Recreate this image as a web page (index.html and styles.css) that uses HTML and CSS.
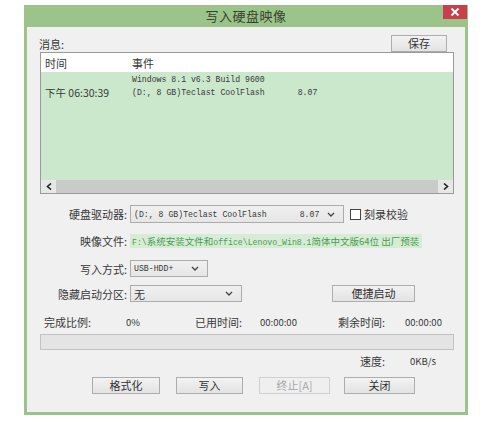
FILE: index.html
```html
<!DOCTYPE html>
<html lang="zh-CN">
<head>
<meta charset="utf-8">
<title>写入硬盘映像</title>
<link rel="stylesheet" href="styles.css">
</head>
<body>
<div class="window">
  <div class="titlebar">
    <span></span>
    <span class="title">写入硬盘映像</span>
    <span class="close"><svg width="10" height="8" viewBox="0 0 10 8"><path d="M1.5 0.5 L8.5 7.5 M8.5 0.5 L1.5 7.5" stroke="#fff" stroke-width="2"/></svg></span>
  </div>
  <div class="content">
    <div class="msg-row">
      <span class="msg-label">消息:</span>
      <button class="btn save">保存</button>
    </div>
    <div class="list">
      <div class="list-head"><span class="c1">时间</span><span class="c2">事件</span></div>
      <div class="list-body">
        <div class="entry">
          <span class="c1 time">下午 06:30:39</span>
          <div class="c2 ev">
            <div class="mono">Windows 8.1 v6.3 Build 9600</div>
            <div class="mono">(D:, 8 GB)Teclast CoolFlash<span class="ver">8.07</span></div>
          </div>
        </div>
      </div>
      <div class="hscroll">
        <span class="arrow"><svg width="6" height="7" viewBox="0 0 6 7"><path d="M5 0.5 L1.5 3.5 L5 6.5" stroke="#222" stroke-width="1.6" fill="none"/></svg></span>
        <span class="track"></span>
        <span class="arrow"><svg width="6" height="7" viewBox="0 0 6 7"><path d="M1 0.5 L4.5 3.5 L1 6.5" stroke="#222" stroke-width="1.6" fill="none"/></svg></span>
      </div>
    </div>

    <div class="row row-drive">
      <span class="lbl">硬盘驱动器:</span>
      <div class="combo combo-drive">
        <span class="mono">(D:, 8 GB)Teclast CoolFlash</span><span class="mono ver2">8.07</span>
        <svg class="chev" width="8" height="5" viewBox="0 0 8 5"><path d="M1 1 L4 4 L7 1" stroke="#444" stroke-width="1.3" fill="none"/></svg>
      </div>
      <span class="check"></span><span class="check-lbl">刻录校验</span>
    </div>

    <div class="row row-image">
      <span class="lbl">映像文件:</span>
      <div class="path"><span class="mono">F:\</span>系统安装文件和<span class="mono">office\Lenovo_Win8.1</span>简体中文版64位 出厂预装</div>
    </div>

    <div class="row row-mode">
      <span class="lbl">写入方式:</span>
      <div class="combo combo-mode">
        <span class="mono">USB-HDD+</span>
        <svg class="chev" width="8" height="5" viewBox="0 0 8 5"><path d="M1 1 L4 4 L7 1" stroke="#444" stroke-width="1.3" fill="none"/></svg>
      </div>
    </div>

    <div class="row row-hide">
      <span class="lbl">隐藏启动分区:</span>
      <div class="combo combo-hide">
        <span>无</span>
        <svg class="chev" width="8" height="5" viewBox="0 0 8 5"><path d="M1 1 L4 4 L7 1" stroke="#444" stroke-width="1.3" fill="none"/></svg>
      </div>
      <button class="btn quick">便捷启动</button>
    </div>

    <div class="stats">
      <span>完成比例:</span><span class="num">0%</span>
      <span>已用时间:</span><span class="num">00:00:00</span>
      <span>剩余时间:</span><span class="num">00:00:00</span>
    </div>

    <div class="progress"></div>

    <div class="speed">
      <span>速度:</span><span class="num">0KB/s</span>
    </div>

    <div class="buttons">
      <button class="btn b-format">格式化</button>
      <button class="btn b-write">写入</button>
      <button class="btn b-stop" disabled>终止[A]</button>
      <button class="btn b-close">关闭</button>
    </div>
  </div>
</div>
</body>
</html>
```

FILE: styles.css
```css
* { box-sizing: border-box; }

body {
  margin: 0;
  background: #ffffff;
  font-family: "Noto Sans CJK SC", "Liberation Sans", sans-serif;
  font-size: 11px;
  color: #383838;
}

.window {
  margin: 5px 0 0 24px;
  width: 444px;
  height: 410px;
  background: #9cc389;
  padding: 0 3px 3px;
  display: flex;
  flex-direction: column;
}

.titlebar {
  height: 22px;
  margin: 0 -3px;
  display: grid;
  grid-template-columns: 1fr auto 1fr;
  align-items: start;
}

.title {
  font-size: 13px;
  line-height: 22px;
  color: #36432f;
  letter-spacing: 0.5px;
}

.close {
  justify-self: end;
  margin-right: 1px;
  width: 24px;
  height: 14px;
  background: #c8404c;
  display: flex;
  align-items: center;
  justify-content: center;
}

.content {
  flex: 1;
  background: #f0f0f0;
  padding: 8px 11px 0 13px;
  display: flex;
  flex-direction: column;
}

.mono {
  font-family: "Liberation Mono", monospace;
  font-size: 8.2px;
}

.btn {
  font-family: "Noto Sans CJK SC", sans-serif;
  font-size: 11px;
  color: #333;
  background: linear-gradient(#f2f2f2, #e3e3e3);
  border: 1px solid #adadad;
  padding: 0;
  margin: 0;
  line-height: 15px;
}

.msg-row {
  height: 17px;
  display: flex;
  align-items: center;
}

.msg-label {
  margin-left: -1px;
}

.save {
  margin-left: auto;
  margin-right: 7px;
  width: 56px;
  height: 17px;
}

.list {
  height: 142px;
  border: 1px solid #9a9a9a;
  background: #ffffff;
  display: flex;
  flex-direction: column;
}

.list-head {
  height: 19px;
  display: flex;
  align-items: center;
  background: #fff;
}

.c1 {
  width: 91px;
  padding-left: 4px;
  flex: none;
}

.list-body {
  flex: 1;
  background: #cbe8cd;
  padding-top: 1px;
}

.entry {
  display: flex;
  align-items: flex-end;
}

.time {
  line-height: 13px;
  font-size: 10.5px;
}

.ev .mono {
  line-height: 13px;
}

.ver {
  margin-left: 33px;
}

.hscroll {
  height: 13px;
  display: flex;
  background: #c8cbc8;
}

.arrow {
  width: 15px;
  display: flex;
  align-items: center;
  justify-content: center;
  background: #e6e8e6;
}

.track { flex: 1; }

.row {
  display: flex;
  align-items: center;
}

.lbl {
  width: 87px;
  text-align: right;
  flex: none;
  margin-right: 3px;
}

.combo {
  display: flex;
  align-items: center;
  border: 1px solid #acacac;
  background: linear-gradient(#f0f0f0, #e6e6e6);
  padding-left: 3px;
}

.chev {
  margin-left: auto;
}

.row-drive {
  margin-top: 11px;
  height: 18px;
}

.combo-drive {
  width: 214px;
  height: 18px;
  padding-right: 8px;
}

.ver2 { margin-left: 33px; }

.check {
  width: 11px;
  height: 11px;
  border: 1px solid #444;
  background: #fff;
  margin-left: 6px;
}

.check-lbl {
  margin-left: 3px;
}

.row-image {
  margin-top: 10px;
  height: 16px;
}

.path {
  width: 292px;
  height: 14px;
  background: #d7ecd4;
  color: #4a9c52;
  font-size: 9.5px;
  line-height: 14px;
  white-space: nowrap;
  overflow: hidden;
  padding-left: 2px;
}

.row-mode {
  margin-top: 11px;
  height: 17px;
}

.combo-mode {
  width: 78px;
  height: 17px;
  padding-right: 8px;
}

.row-hide {
  margin-top: 8px;
  height: 17px;
}

.combo-hide {
  width: 112px;
  height: 17px;
  padding-right: 8px;
}

.quick {
  margin-left: auto;
  margin-right: 39px;
  width: 83px;
  height: 17px;
}

.stats {
  margin-top: 12px;
  height: 15px;
  display: grid;
  grid-template-columns: 82px 69px 65px 78px 67px auto;
  padding-left: 4px;
  align-items: center;
}

.num {
  font-size: 9.5px;
}

.progress {
  margin-top: 5px;
  height: 16px;
  border: 1px solid #c2c2c2;
  background: #e4e4e4;
}

.speed {
  margin-top: 3px;
  height: 14px;
  display: grid;
  grid-template-columns: 50px auto;
  padding-left: 320px;
  align-items: center;
}

.buttons {
  margin-top: 10px;
  display: flex;
  padding-left: 52px;
}

.buttons .btn {
  height: 17px;
}

.b-format { width: 68px; }
.b-write { width: 67px; margin-left: 16px; }
.b-stop {
  width: 71px;
  margin-left: 16px;
  color: #a8a8a8;
  border-color: #d0d0d0;
  background: #efefef;
}
.b-close { width: 71px; margin-left: 14px; }
```
